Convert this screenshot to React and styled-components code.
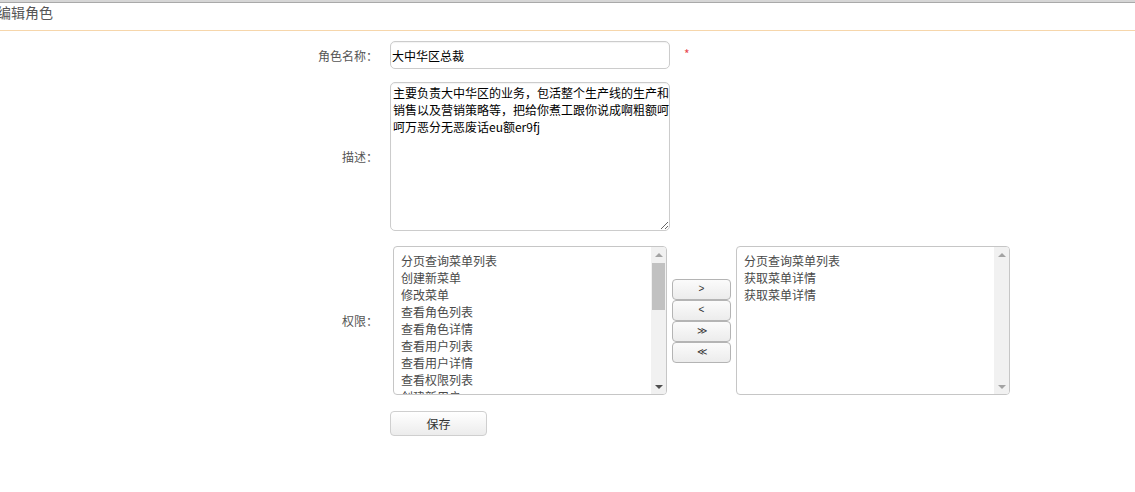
import React from "react";
import styled, { createGlobalStyle } from "styled-components";

const Global = createGlobalStyle`
  html, body { margin: 0; padding: 0; background: #fff; }
  body {
    font-family: "Noto Sans CJK SC", "Liberation Sans", sans-serif;
    font-size: 12px;
    color: #555;
    width: 1135px;
    overflow: hidden;
    text-spacing-trim: space-all;
  }
  * { box-sizing: border-box; text-spacing-trim: space-all; }
`;

const Page = styled.div`
  width: 1135px;
  height: 492px;
  overflow: hidden;
`;

const TopBar = styled.div`
  height: 3px;
  background: linear-gradient(#d6d6d6 0 2px, #a9a9a9 2px 3px);
`;

const Header = styled.div`
  height: 28px;
  border-bottom: 1px solid #f6d6ab;
`;

const Title = styled.h1`
  margin: 0 0 0 -3px;
  font-size: 14px;
  line-height: 18px;
  font-weight: normal;
  color: #555;
`;

const Form = styled.div`
  margin-top: 10px;
  display: flex;
  flex-direction: column;
`;

const Row = styled.div`
  display: grid;
  grid-template-columns: 390px 1fr;
  align-items: center;
  margin-bottom: ${(p) => p.$gap || 0}px;
`;

const Label = styled.label`
  text-align: right;
  padding-right: 12px;
  font-size: 12px;
  line-height: 17px;
  color: #555;
`;

const Field = styled.div`
  display: flex;
  align-items: center;
`;

const TextInput = styled.input`
  width: 280px;
  height: 28px;
  border: 1px solid #ccc;
  border-radius: 5px;
  padding: 0 0 0 1px;
  font-family: inherit;
  font-size: 12px;
  color: #000;
  background: #fff;
  box-shadow: inset 0 1px 1px rgba(0, 0, 0, 0.05);
  outline: none;
`;

const Required = styled.span`
  margin-left: 14px;
  margin-top: -4px;
  color: #e8484f;
  font-size: 12px;
`;

const TextArea = styled.textarea`
  display: block;
  width: 280px;
  height: 149px;
  border: 1px solid #ccc;
  border-radius: 5px;
  padding: 1px 0 2px 2px;
  font-family: inherit;
  font-size: 12px;
  line-height: 17px;
  color: #000;
  background: #fff;
  box-shadow: inset 0 1px 1px rgba(0, 0, 0, 0.05);
  outline: none;
  overflow: hidden;
`;

const Perms = styled.div`
  display: flex;
  align-items: center;
  gap: 5px;
  margin-left: 3px;
`;

const ListBox = styled.div`
  width: 274px;
  height: 149px;
  border: 1px solid #c6c6c6;
  border-radius: 4px;
  display: flex;
  overflow: hidden;
  background: #fff;
`;

const Items = styled.ul`
  flex: 1;
  margin: 0;
  padding: 5px 0 0 7px;
  list-style: none;
  overflow: hidden;
`;

const Item = styled.li`
  font-size: 12px;
  line-height: 17px;
  color: #4a4a4a;
  white-space: nowrap;
`;

const ScrollBar = styled.div`
  width: 15px;
  background: #f1f1f1;
  display: flex;
  flex-direction: column;
`;

const ArrowCell = styled.div`
  height: 15px;
  display: flex;
  align-items: center;
  justify-content: center;
`;

const Triangle = styled.span`
  width: 0;
  height: 0;
  border-left: 4px solid transparent;
  border-right: 4px solid transparent;
  ${(p) =>
    p.$dir === "up"
      ? `border-bottom: 4px solid ${p.$color};`
      : `border-top: 4px solid ${p.$color};`}
`;

const Thumb = styled.div`
  height: 47px;
  margin: 1px 1px 0 1px;
  background: #c1c1c1;
`;

const Track = styled.div`
  flex: 1;
`;

const MoveButtons = styled.div`
  display: flex;
  flex-direction: column;
`;

const MoveButton = styled.button`
  width: 59px;
  height: 21px;
  padding: 0;
  border: 1px solid #b4b4b4;
  border-radius: 4px;
  background: linear-gradient(#fbfbfb, #ececec);
  font-family: "Liberation Sans", sans-serif;
  font-size: 10px;
  line-height: 1;
  color: #333;
`;

const SaveButton = styled.button`
  width: 97px;
  height: 25px;
  padding: 0;
  border: 1px solid #cfcfcf;
  border-radius: 4px;
  background: linear-gradient(#ffffff, #ececec);
  font-family: inherit;
  font-size: 12px;
  color: #333;
`;

const Scroll = ({ thumb, upColor, downColor }) => (
  <ScrollBar>
    <ArrowCell>
      <Triangle $dir="up" $color={upColor} />
    </ArrowCell>
    {thumb && <Thumb />}
    <Track />
    <ArrowCell>
      <Triangle $dir="down" $color={downColor} />
    </ArrowCell>
  </ScrollBar>
);

const leftItems = [
  "分页查询菜单列表",
  "创建新菜单",
  "修改菜单",
  "查看角色列表",
  "查看角色详情",
  "查看用户列表",
  "查看用户详情",
  "查看权限列表",
  "创建新用户",
  "修改用户",
];

const rightItems = ["分页查询菜单列表", "获取菜单详情", "获取菜单详情"];

const description =
  "主要负责大中华区的业务，包活整个生产线的生产和\n销售以及营销策略等，把给你煮工跟你说成啊粗额呵\n呵万恶分无恶废话eu额er9fj";

export default function App() {
  return (
    <Page>
      <Global />
      <TopBar />
      <Header>
        <Title>编辑角色</Title>
      </Header>
      <Form>
        <Row $gap={13}>
          <Label>角色名称：</Label>
          <Field>
            <TextInput defaultValue="大中华区总裁" />
            <Required>*</Required>
          </Field>
        </Row>
        <Row $gap={15}>
          <Label>描述：</Label>
          <Field>
            <TextArea defaultValue={description} />
          </Field>
        </Row>
        <Row $gap={16}>
          <Label>权限：</Label>
          <Perms>
            <ListBox>
              <Items>
                {leftItems.map((t, i) => (
                  <Item key={i}>{t}</Item>
                ))}
              </Items>
              <Scroll thumb upColor="#a3a3a3" downColor="#505050" />
            </ListBox>
            <MoveButtons>
              <MoveButton>&gt;</MoveButton>
              <MoveButton>&lt;</MoveButton>
              <MoveButton>≫</MoveButton>
              <MoveButton>≪</MoveButton>
            </MoveButtons>
            <ListBox>
              <Items>
                {rightItems.map((t, i) => (
                  <Item key={i}>{t}</Item>
                ))}
              </Items>
              <Scroll upColor="#a3a3a3" downColor="#a3a3a3" />
            </ListBox>
          </Perms>
        </Row>
        <Row>
          <span />
          <Field>
            <SaveButton>保存</SaveButton>
          </Field>
        </Row>
      </Form>
    </Page>
  );
}
